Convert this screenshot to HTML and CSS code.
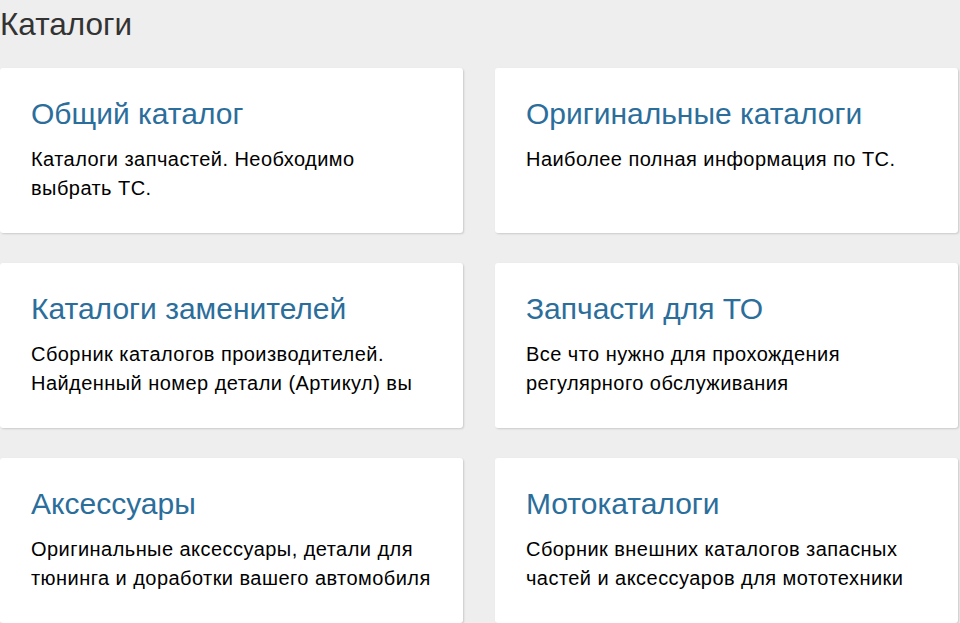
FILE: index.html
```html
<!DOCTYPE html>
<html lang="ru">
<head>
<meta charset="utf-8">
<title>Каталоги</title>
<link rel="stylesheet" href="styles.css">
</head>
<body>
<div class="page">
  <h1 class="page-title">Каталоги</h1>
  <div class="grid">
    <a class="card" href="#">
      <h2 class="card-title">Общий каталог</h2>
      <p class="card-text">Каталоги запчастей. Необходимо выбрать ТС.</p>
    </a>
    <a class="card" href="#">
      <h2 class="card-title">Оригинальные каталоги</h2>
      <p class="card-text">Наиболее полная информация по ТС.</p>
    </a>
    <a class="card" href="#">
      <h2 class="card-title">Каталоги заменителей</h2>
      <p class="card-text clip">Сборник каталогов производителей. Найденный номер детали (Артикул) вы</p>
    </a>
    <a class="card" href="#">
      <h2 class="card-title">Запчасти для ТО</h2>
      <p class="card-text">Все что нужно для прохождения регулярного обслуживания</p>
    </a>
    <a class="card" href="#">
      <h2 class="card-title">Аксессуары</h2>
      <p class="card-text">Оригинальные аксессуары, детали для тюнинга и доработки вашего автомобиля</p>
    </a>
    <a class="card" href="#">
      <h2 class="card-title">Мотокаталоги</h2>
      <p class="card-text">Сборник внешних каталогов запасных частей и аксессуаров для мототехники</p>
    </a>
  </div>
</div>
</body>
</html>
```
FILE: styles.css
```css
html, body {
  margin: 0;
  padding: 0;
  background: #eeeeee;
  font-family: "Liberation Sans", Arial, sans-serif;
}
.page {
  width: 958px;
}
.page-title {
  margin: 0;
  padding-top: 4px;
  font-size: 31.5px;
  font-weight: normal;
  line-height: 40px;
  color: #333333;
}
.grid {
  margin-top: 24px;
  display: grid;
  grid-template-columns: 463px 463px;
  column-gap: 32px;
  row-gap: 30px;
}
.card {
  display: block;
  height: 165px;
  box-sizing: border-box;
  padding: 28px 31px 0 31px;
  background: #ffffff;
  border-radius: 3px;
  box-shadow: 1px 1px 2px rgba(0, 0, 0, 0.15);
  text-decoration: none;
}
.card-title {
  margin: 0;
  font-size: 30px;
  font-weight: normal;
  line-height: 36px;
  color: #2b6e9b;
}
.card-text {
  margin: 13px 0 0 0;
  font-size: 20px;
  letter-spacing: 0.45px;
  line-height: 29px;
  color: #000000;
}
.clip {
  max-height: 58px;
  overflow: hidden;
}
```
